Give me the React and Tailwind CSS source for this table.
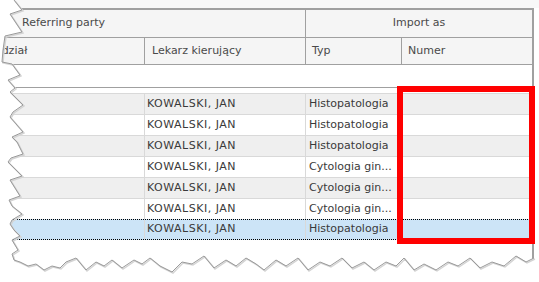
import React from "react";

const rows = [
  { typ: "Histopatologia", kind: "grey" },
  { typ: "Histopatologia", kind: "white" },
  { typ: "Histopatologia", kind: "grey" },
  { typ: "Cytologia gin...", kind: "white" },
  { typ: "Cytologia gin...", kind: "grey" },
  { typ: "Cytologia gin...", kind: "white" },
  { typ: "Histopatologia", kind: "sel" },
];

const leftEdge = [
  [14, 0], [22, 10], [10, 14], [22, 32], [5, 36], [3, 50], [2, 62], [12, 64], [20, 75], [8, 80],
  [15, 88], [10, 92], [23, 105], [13, 112], [10, 117], [23, 132], [12, 137], [17, 142], [23, 154],
  [11, 158], [8, 162], [22, 176], [10, 180], [20, 196], [9, 200], [12, 206], [22, 214], [12, 220],
  [10, 224], [14, 230], [20, 236], [12, 240], [18, 250], [12, 254], [14, 260],
];
const bottomEdge = [
  [20, 262], [28, 266], [36, 264], [44, 270], [52, 266], [60, 268], [66, 262], [76, 258],
  [86, 270], [96, 262], [104, 266], [112, 260], [122, 268], [134, 260], [142, 264], [150, 258],
  [160, 266], [172, 272], [182, 262], [192, 264], [204, 256], [214, 268], [226, 260], [236, 266],
  [246, 258], [256, 264], [264, 270], [276, 260], [286, 266], [298, 258], [308, 270], [320, 262],
  [330, 266], [342, 258], [352, 268], [364, 262], [374, 270], [386, 262], [396, 266], [404, 258],
  [414, 270], [424, 264], [436, 270], [448, 262], [458, 266], [470, 258], [480, 268], [492, 262],
  [504, 266], [516, 256], [526, 262], [534, 258],
];

function TornEdges() {
  const edge = [...leftEdge, ...bottomEdge];
  const fillPts = [[0, 0], ...edge, [539, 258], [539, 282], [0, 282]]
    .map((p) => p.join(","))
    .join(" ");
  const linePts = edge.map((p) => p.join(",")).join(" ");
  const shadowPts = edge.map(([x, y]) => `${x + 1},${y + 1}`).join(" ");
  return (
    <svg className="absolute inset-0 pointer-events-none" width="539" height="282" viewBox="0 0 539 282">
      <polygon points={fillPts} fill="#ffffff" />
      <polyline points={shadowPts} fill="none" stroke="#d4d4d4" strokeWidth="1.5" />
      <polyline points={linePts} fill="none" stroke="#9a9a9a" strokeWidth="1" />
    </svg>
  );
}

export default function App() {
  const font = { fontFamily: '"DejaVu Sans", Verdana, sans-serif' };
  return (
    <div className="relative w-[539px] h-[282px] bg-white overflow-hidden text-[11px] text-[#3a3a3a]" style={font}>
      <div className="h-[8px] bg-[#f8f8f8]" />
      <div className="flex">
        <div className="ml-[-40px] w-[574px] border-t-2 border-r-2 border-[#a0a0a0]">
          {/* header row 1 */}
          <div className="flex h-[28px] bg-[#f5f5f5] border-b border-[#a0a0a0]">
            <div className="w-[346px] border-r border-[#a0a0a0] flex items-center pl-[62px] text-[#4a4a4a]">
              Referring party
            </div>
            <div className="w-[226px] flex items-center justify-center text-[#4a4a4a]">Import as</div>
          </div>
          {/* header row 2 */}
          <div className="flex h-[27px] bg-[#f5f5f5] border-b border-[#a0a0a0] text-[#4a4a4a]">
            <div className="w-[185px] border-r border-[#a0a0a0] flex items-center pl-[26px] whitespace-nowrap">Oddział</div>
            <div className="w-[161px] border-r border-[#a0a0a0] flex items-center pl-[7px]">Lekarz kierujący</div>
            <div className="w-[96px] border-r border-[#a0a0a0] flex items-center pl-[6px]">Typ</div>
            <div className="w-[130px] flex items-center pl-[6px]">Numer</div>
          </div>
          {/* empty filter row */}
          <div className="h-[23px] bg-white border-b border-[#a0a0a0]" />
          <div className="h-[5px] bg-white" />
          {rows.map((r, i) => (
            <div
              key={i}
              className={
                r.kind === "sel"
                  ? "flex h-[21px] bg-[#cce4f7] border-y border-dotted border-black"
                  : r.kind === "grey"
                  ? "flex h-[21px] bg-[#efefef] border-t border-[#d9d9d9]"
                  : "flex h-[21px] bg-white border-t border-[#d9d9d9]"
              }
            >
              <div className="w-[185px] border-r border-[#d9d9d9]" />
              <div className="w-[161px] border-r border-[#d9d9d9] flex items-center pl-[2px] whitespace-nowrap tracking-[0.5px]">
                KOWALSKI, JAN
              </div>
              <div className="w-[96px] border-r border-[#d9d9d9] flex items-center pl-[3px] whitespace-nowrap overflow-hidden">
                {r.typ}
              </div>
              <div className="w-[130px]" />
            </div>
          ))}
          <div className="h-[30px] bg-white" />
        </div>
      </div>
      <TornEdges />
      <div className="absolute left-[397px] top-[86px] w-[138px] h-[158px] border-[6px] border-[#ff0000]" />
    </div>
  );
}
